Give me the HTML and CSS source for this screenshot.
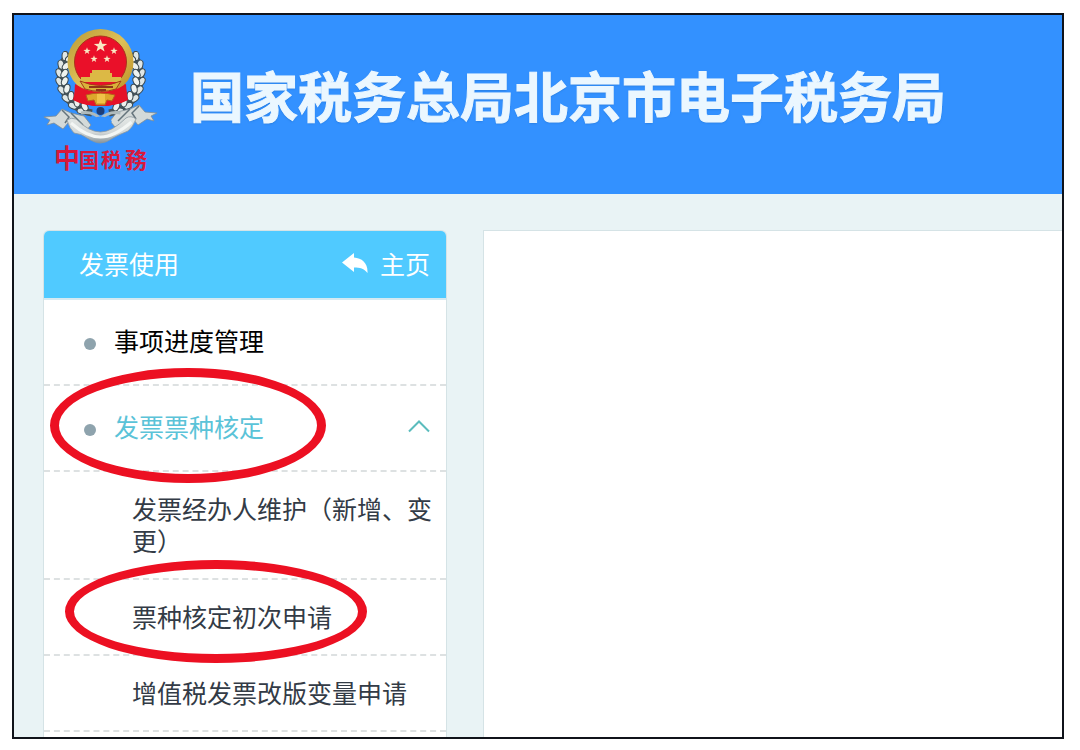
FILE: index.html
```
<!DOCTYPE html>
<html lang="zh-CN">
<head>
<meta charset="utf-8">
<meta name="viewport" content="width=device-width, initial-scale=1.0">
<title>国家税务总局北京市电子税务局</title>
<link rel="stylesheet" href="styles.css">
</head>

<body>
<div class="page">
	<header class="header">
		<svg class="logo" viewBox="0 0 120 155" role="img" aria-label="中国税务">
			<defs>
				<linearGradient id="gold" x1="0" y1="0" x2="1" y2="1">
					<stop offset="0" stop-color="#b99a35"/>
					<stop offset="0.5" stop-color="#dfc158"/>
					<stop offset="1" stop-color="#b98d22"/>
				</linearGradient>
				<linearGradient id="silver" x1="0" y1="0" x2="0" y2="1">
					<stop offset="0" stop-color="#e4e8e6"/>
					<stop offset="0.6" stop-color="#d3d8d8"/>
					<stop offset="1" stop-color="#87949c"/>
				</linearGradient>
				<g id="grain">
					<ellipse cx="-3" cy="0" rx="3" ry="4.600" transform="rotate(-28)" fill="#dfe6e5" stroke="#3c4a50" stroke-width="1"/>
					<ellipse cx="3" cy="0" rx="3" ry="4.600" transform="rotate(28)" fill="#eef2ef" stroke="#3c4a50" stroke-width="1"/>
				</g>
				<polygon id="star" points="0,-5 1.2,-1.6 4.8,-1.5 1.9,0.6 2.9,4 0,2 -2.9,4 -1.9,0.6 -4.8,-1.5 -1.2,-1.6"/>
				<g id="ear">
					<path d="M29 28C19 40 18 56 26 71C32 81 40 86 52 88" fill="none" stroke="#46545b" stroke-width="7"/>
					<use href="#grain" transform="translate(28 31) rotate(28)"/>
					<use href="#grain" transform="translate(24 39) rotate(16)"/>
					<use href="#grain" transform="translate(22 47) rotate(6)"/>
					<use href="#grain" transform="translate(22 55) rotate(-4)"/>
					<use href="#grain" transform="translate(24 63) rotate(-14)"/>
					<use href="#grain" transform="translate(28 71) rotate(-26)"/>
					<use href="#grain" transform="translate(34 78) rotate(-40)"/>
					<use href="#grain" transform="translate(42 83) rotate(-55)"/>
				</g>
				<g id="tail">
					<path d="M4 92l12 -1 6 -7 9 4 13 3 7 9 -5 6 -10 -3 -8 -5 -5 6 -9 -6 -7 2 3 -5z" fill="#d4dad9" stroke="#7f8d94" stroke-width=".8"/>
					<path d="M22 85l7 7 -4 6M31 88l12 12" fill="none" stroke="#64747c" stroke-width="1.500"/>
				</g>
			</defs>
			<use href="#ear"/>
			<use href="#ear" transform="translate(121 0) scale(-1 1)"/>
			<path d="M37 58h48l3 17q-11 6 -27.500 6t-27.500 -6z" fill="#e30f24"/>
			<circle cx="60.500" cy="37" r="33" fill="url(#gold)"/>
			<circle cx="60.500" cy="37" r="26" fill="#ea1029" stroke="#a9341c"/>
			<path d="M35 59q12 8 25.500 8t25.500 -8l1 16q-12 6 -26.500 6t-26.500 -6z" fill="#e51228"/>
			<g fill="#f9e9c4">
				<use href="#star" transform="translate(60.500 21) scale(1.400)"/>
				<use href="#star" transform="translate(47 26) scale(.75)"/>
				<use href="#star" transform="translate(74 26) scale(.75)"/>
				<use href="#star" transform="translate(54 34) scale(.75)"/>
				<use href="#star" transform="translate(67 34) scale(.75)"/>
			</g>
			<path d="M52 45h18v3h2v4h9v5H41v-5h9v-4h2z" fill="#dcb945"/>
			<path d="M40 56q20.500 9 41 0l-5 8q-15 5 -31 0z" fill="#d9b23a" stroke="#a53a18"/>
			<path d="M49 62h24M56 65h10" stroke="#8e3419" stroke-width="2"/>
			<path d="M46 70q14 -4 29 0l-3 6 -5 -1 -2 5h-9l-2 -5 -6 1z" fill="#dda82b" stroke="#b95b1c"/>
			<path d="M57 69h8v9h-8z" fill="#f0c348"/>
			<use href="#tail"/>
			<use href="#tail" transform="translate(121 -4) scale(-1 1)"/>
			<path d="M41 88q12 -2 19.500 6q8 -8 20 -6" fill="none" stroke="#aebabc" stroke-width="3"/>
			<circle cx="60.500" cy="86" r="4" fill="#1d3d78"/>
			<path d="M50 96q10 -9 22 0l-5 8q-6 3 -12 0z" fill="#3391ff"/>
			<path d="M27 95q4 -3 9 -1q13 13 24.500 13t25.500 -14q5 -3 10 1q-3 8 -8 12q-10 4 -15 7q-7 5 -12.500 5t-13.500 -5q-5 -4 -13 -5q-5 -5 -7 -13z" fill="url(#silver)" stroke="#8b989e" stroke-width=".8"/>
			<path d="M31 98q16 14 29.500 14t31 -15" fill="none" stroke="#f3f6f4" stroke-width="3"/>
			<g class="logo_text">
				<text x="14" y="143" font-size="26">中</text>
				<text x="39" y="143" font-size="20">国</text>
				<text x="61" y="143" font-size="20">税</text>
				<text x="85" y="143" font-size="22">務</text>
			</g>
		</svg>
		<h1 class="title">国家税务总局北京市电子税务局</h1>
	</header>

	<div class="content">
		<aside class="sidebar">
			<div class="sidebar_head">
				<span>发票使用</span>
				<a class="home" href="#">
					<svg class="home_icon" viewBox="0 0 26 20" aria-hidden="true">
						<path d="M0 9.500L12 0v4.500C20 5 26 10 25.500 20C22 15.500 18 14.500 12 14.500V19z" fill="#fff"/>
					</svg>
					主页
				</a>
			</div>
			<nav>
				<ul class="menu">
					<li class="menu_item"><a class="menu_link" href="#">事项进度管理</a></li>
					<li class="menu_item">
						<button class="menu_link active" type="button" aria-expanded="true">
							发票票种核定
							<svg class="chevron" viewBox="0 0 22 14" aria-hidden="true">
								<path d="M1 12.500L11 2.500L21 12.500" fill="none" stroke="#5bbcbd" stroke-width="2"/>
							</svg>
						</button>
						<span class="mark mark_group"></span>
					</li>
					<li class="menu_item"><a class="sub_link" href="#">发票经办人维护（新增、变更）</a></li>
					<li class="menu_item">
						<a class="sub_link" href="#">票种核定初次申请</a>
						<span class="mark mark_apply"></span>
					</li>
					<li class="menu_item"><a class="sub_link" href="#">增值税发票改版变量申请</a></li>
				</ul>
			</nav>
		</aside>
		<main class="main"></main>
	</div>
</div>
</body>
</html>
```
FILE: styles.css
```
* {
	box-sizing: border-box;
}

body {
	display: flex;
	min-height: 100vh;
	margin: 0;
	padding: 13px 16px 11px 12px;
	background: #fff;
	color: #333b46;
	font-family: "Noto Sans CJK SC", sans-serif;
	font-size: 25px;
	line-height: 32px;
}

a {
	color: inherit;
	text-decoration: none;
}

.page {
	display: flex;
	flex: 1;
	flex-direction: column;
	border: 2px solid #10131a;
	background: #e9f3f5;
}

.header {
	display: flex;
	align-items: flex-start;
	gap: 30px;
	padding: 10px 26px 14px;
	background: #3391ff;
}

.logo {
	flex: none;
	width: 120px;
	height: 155px;
}

.logo_text {
	fill: #d9183c;
	font-weight: bold;
}

.title {
	margin: 34px 0 0;
	color: #ebf7ff;
	font-size: 54px;
	font-weight: bold;
	line-height: 72px;
	text-shadow: 0 1px 2px #2478d8;
	-webkit-text-stroke: 1px #ebf7ff;
}

.content {
	display: flex;
	flex: 1;
	gap: 36px;
	padding: 36px 0 0 29px;
}

.sidebar {
	flex: none;
	width: 404px;
	border: 1px solid #d5e3e6;
	border-bottom: 0;
	border-radius: 6px 6px 0 0;
	background: #fff;
}

.sidebar_head {
	display: flex;
	align-items: center;
	justify-content: space-between;
	padding: 16px 16px 19px 35px;
	border-bottom: 2px solid #d5eaf2;
	border-radius: 5px 5px 0 0;
	background: #50caff;
	background-clip: padding-box;
	color: #fff;
}

.home {
	display: flex;
	align-items: center;
	gap: 12px;
}

.home_icon {
	width: 26px;
	height: 20px;
}

.menu {
	margin: 0;
	padding: 0;
	list-style: none;
}

.menu_item {
	position: relative;
	border-bottom: 2px dashed #dde1e2;
}

.menu_link {
	display: flex;
	align-items: center;
	width: 100%;
	padding: 24px 16px 28px 40px;
	border: 0;
	background: none;
	color: #000;
	font: inherit;
	text-align: left;
}

.menu_link::before {
	content: "";
	width: 12px;
	height: 12px;
	margin: 8px 18px 0 0;
	border-radius: 50%;
	background: #8ea3ad;
}

.menu_link.active {
	color: #5bc3d8;
}

.chevron {
	width: 22px;
	height: 14px;
	margin-left: auto;
}

.sub_link {
	display: block;
	padding: 20px 12px 22px 88px;
}

/* red rings over the entries to pick */
.mark {
	position: absolute;
	border: 9px solid #ec1022;
	border-radius: 50%;
	pointer-events: none;
	z-index: 1;
}

.mark_group {
	top: -18px;
	left: 6px;
	width: 276px;
	height: 115px;
}

.mark_apply {
	top: -20px;
	left: 21px;
	width: 302px;
	height: 103px;
}

.main {
	flex: 1;
	border: 1px solid #d5e3e6;
	border-width: 1px 0 0 1px;
	background: #fff;
}
```
